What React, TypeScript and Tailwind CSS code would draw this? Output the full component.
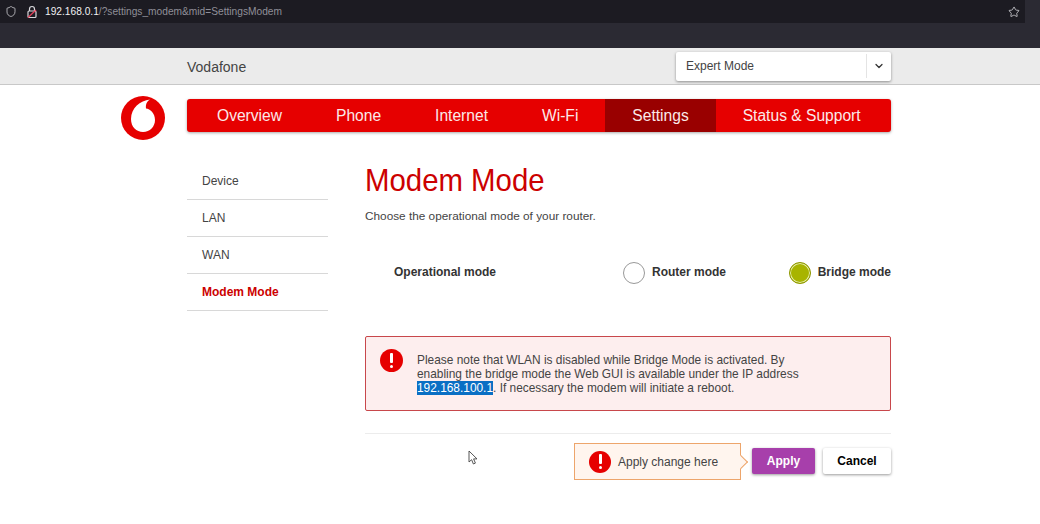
import { Star, ChevronDown, Shield } from 'lucide-react';

const navItems = ['Overview', 'Phone', 'Internet', 'Wi-Fi', 'Settings', 'Status & Support'];
const sideItems = ['Device', 'LAN', 'WAN', 'Modem Mode'];

function AlertDot({ size }: { size: string }) {
  return (
    <div className={`${size} shrink-0 rounded-full bg-[#e60000] flex items-center justify-center`}>
      <div className="flex flex-col items-center gap-[2px]">
        <div className="w-[3px] h-[10px] rounded-[1px] bg-white" />
        <div className="w-[3px] h-[3px] rounded-full bg-white" />
      </div>
    </div>
  );
}

function BrowserBar() {
  return (
    <div className="h-[48px] bg-[#2b2a33]">
      <div className="h-[23px] w-[1025px] bg-[#1c1b22] flex items-center text-[10.200px] relative">
        <Shield className="ml-[5px] w-[12px] h-[13px] text-[#d8d8dc]" strokeWidth={1.5} />
        <svg className="ml-[9px] w-[12px] h-[14px]" viewBox="0 0 12 14" fill="none">
          <path d="M3.500 6V4a2.500 2.500 0 0 1 5 0v2" stroke="#d8d8dc" strokeWidth="1.2" />
          <rect x="2" y="6" width="8" height="6.500" rx="1" stroke="#d8d8dc" strokeWidth="1.2" />
          <path d="M2 12.500 10 5" stroke="#e2405a" strokeWidth="1.3" />
        </svg>
        <span className="ml-[7px] text-[#f0f0f2]">192.168.0.1</span>
        <span className="text-[#8f8f98]">/?settings_modem&amp;mid=SettingsModem</span>
        <Star className="ml-auto mr-[5px] w-[12px] h-[12px] text-[#e4e4e8]" strokeWidth={1.5} />
      </div>
    </div>
  );
}

function Header() {
  return (
    <div className="h-[37px] bg-[#ebebeb] border-b border-[#c8c8c8]">
      <div className="w-[704px] ml-[187px] flex items-center justify-between h-[36px]">
        <span className="text-[14px] mt-[3px] text-[#444]">Vodafone</span>
        <div className="w-[215px] h-[29px] bg-white rounded-[2px] shadow-[0_1px_3px_rgba(0,0,0,0.4)] flex items-center">
          <span className="flex-1 pl-[10px] text-[12px] text-[#444]">Expert Mode</span>
          <div className="w-[25px] h-[24px] border-l border-[#e4e4e4] flex items-center justify-center">
            <ChevronDown className="w-[12px] h-[12px] text-[#333]" strokeWidth={2.5} />
          </div>
        </div>
      </div>
    </div>
  );
}

function Logo() {
  return (
    <svg className="w-[44px] h-[44px] shrink-0" viewBox="0 0 44 44">
      <circle cx="22" cy="22" r="22" fill="#e60000" />
      <path
        d="M29 3.500C19 4.500 10 12 10 23c0 8 5.500 13 12 13 7 0 12-5.500 12-12 0-7-5-11-9-11.500C24.500 8.500 26 5 29 3.500z"
        fill="#fff"
      />
    </svg>
  );
}

function Nav() {
  return (
    <div className="w-[704px] h-[33px] bg-[#e60000] rounded-[3px] shadow-[0_1px_3px_rgba(0,0,0,0.35)] flex pl-[3px] overflow-hidden">
      {navItems.map((item) => (
        <div
          key={item}
          className={`px-[27px] flex items-center whitespace-nowrap text-[15.600px] text-[#fbe9e9] ${item === 'Settings' ? 'bg-[#990000]' : ''}`}
        >
          {item}
        </div>
      ))}
    </div>
  );
}

function Sidebar() {
  return (
    <div className="w-[141px] ml-[66px] mt-[31px] shrink-0">
      {sideItems.map((item) => (
        <div
          key={item}
          className={`h-[37px] pl-[15px] flex items-center border-b border-[#d8d8d8] text-[12px] ${
            item === 'Modem Mode' ? 'font-bold text-[#cc0000]' : 'text-[#444]'
          }`}
        >
          {item}
        </div>
      ))}
    </div>
  );
}

function Radio({ label, selected }: { label: string; selected?: boolean }) {
  return (
    <div className="flex items-start gap-[7px]">
      <div
        className={`w-[22px] h-[22px] rounded-full border ${
          selected ? 'bg-[#a8b400] border-[#8d9700] shadow-[inset_0_0_0_1px_#e8eeb0]' : 'bg-white border-[#999]'
        }`}
      />
      <span className="text-[12px] font-bold text-[#333] mt-[1px]">{label}</span>
    </div>
  );
}

function Content() {
  return (
    <div className="w-[526px] ml-[37px] shrink-0">
      <h1 className="mt-[28px] text-[32px] leading-[40px] text-[#cc0000] scale-x-[0.918] origin-left">Modem Mode</h1>
      <p className="mt-[8px] text-[11.800px] leading-[16px] text-[#444]">Choose the operational mode of your router.</p>
      <div className="mt-[38px] flex items-start h-[22px]">
        <span className="ml-[29px] mt-[1px] w-[229px] text-[12px] font-bold text-[#333]">Operational mode</span>
        <Radio label="Router mode" />
        <div className="ml-auto">
          <Radio label="Bridge mode" selected />
        </div>
      </div>
      <div className="mt-[52px] h-[75px] bg-[#fdeeee] border border-[#c8474b] rounded-[2px] flex pl-[14px] pt-[12px]">
        <AlertDot size="w-[23px] h-[23px]" />
        <p className="ml-[14px] w-[400px] text-[11.900px] leading-[14px] text-[#444] pt-[4px]">
          Please note that WLAN is disabled while Bridge Mode is activated. By enabling the bridge mode the Web GUI is
          available under the IP address <span className="bg-[#0a6fc4] text-white">192.168.100.1</span>. If necessary
          the modem will initiate a reboot.
        </p>
      </div>
      <div className="mt-[22px] border-t border-[#ececec] pt-[9px] flex justify-end items-start">
        <div className="relative w-[167px] h-[37px] mr-[1px] bg-[#fff5ee] border border-[#eda56b] flex items-center pl-[14px] gap-[7px]">
          <AlertDot size="w-[22px] h-[22px]" />
          <span className="text-[12px] text-[#444]">Apply change here</span>
          <div className="absolute right-[-6px] top-[13px] w-[10px] h-[10px] rotate-45 bg-[#fff5ee] border-t border-r border-[#eda56b]" />
        </div>
        <button className="ml-[10px] mt-[5px] w-[63px] h-[26px] rounded-[2px] bg-[#a73fab] text-white text-[12px] font-bold shadow-[0_1px_3px_rgba(0,0,0,0.4)]">
          Apply
        </button>
        <button className="ml-[8px] mt-[5px] w-[68px] h-[26px] rounded-[2px] bg-white text-black text-[12px] font-bold shadow-[0_1px_3px_rgba(0,0,0,0.4)]">
          Cancel
        </button>
      </div>
    </div>
  );
}

export default function App() {
  return (
    <div className="w-[1040px] h-[524px] bg-white overflow-hidden relative font-['Liberation_Sans',Arial,sans-serif]">
      <BrowserBar />
      <Header />
      <div className="flex items-start mt-[11px] ml-[121px]">
        <Logo />
        <div className="ml-[22px] mt-[3px]">
          <Nav />
        </div>
      </div>
      <div className="flex items-start mt-[-8px] ml-[121px]">
        <Sidebar />
        <Content />
      </div>
      <svg className="absolute left-[468px] top-[450px] w-[11px] h-[16px]" viewBox="0 0 11 16" fill="#fff" stroke="#444" strokeWidth="0.9">
        <path d="M1 1v11l2.600-2.300L5.400 14l2-0.900-1.800-4.200H9z" />
      </svg>
    </div>
  );
}
